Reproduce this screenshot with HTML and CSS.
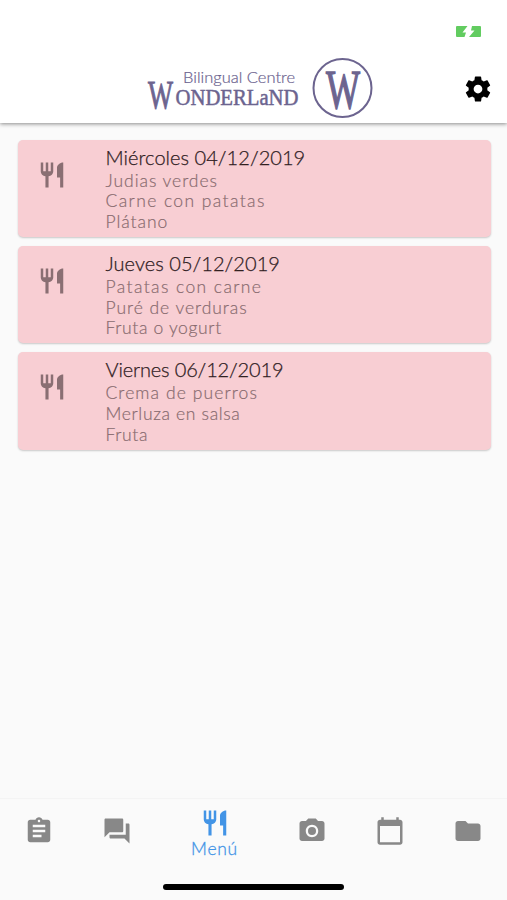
FILE: index.html
```
<!DOCTYPE html>
<html lang="es">
<head>
    <meta charset="UTF-8">
    <meta name="viewport" content="width=device-width, initial-scale=1.0">
    <title>Wonderland - Menú</title>
    <link rel="stylesheet" href="styles.css">
</head>
<body>
    <svg class="sprite" xmlns="http://www.w3.org/2000/svg">
        <symbol id="icon-menu" viewBox="0 0 24 24"><path d="M11 9H9V2H7v7H5V2H3v7c0 2.12 1.66 3.84 3.75 3.97V22h2.5v-9.03C11.34 12.84 13 11.12 13 9V2h-2v7zm5-3v8h2.5v8H21V2c-2.76 0-5 2.24-5 4z"/></symbol>
    </svg>

    <header class="header">
        <div class="status-bar">
            <svg class="battery" viewBox="0 0 25 11"><path d="M1 0h10.500L6.500 6.500H10L8.500 11H1a1 1 0 0 1-1-1V1a1 1 0 0 1 1-1z"/><path d="M16 0h8a1 1 0 0 1 1 1v9a1 1 0 0 1-1 1H13l5.500-6.500H15z"/></svg>
        </div>
        <div class="toolbar">
            <svg class="logo" viewBox="0 0 228 64">
                <text class="logo-small" x="37" y="25.500" textLength="112" lengthAdjust="spacingAndGlyphs">Bilingual Centre</text>
                <text class="logo-cap" x="2" y="51" textLength="25" lengthAdjust="spacingAndGlyphs">W</text>
                <text class="logo-name" x="29.500" y="47.500" textLength="123" lengthAdjust="spacingAndGlyphs">ONDERLaND</text>
                <circle cx="196.500" cy="31" r="29"/>
                <text class="logo-mark" x="180" y="51" textLength="34" lengthAdjust="spacingAndGlyphs">W</text>
            </svg>
            <button class="settings" aria-label="Ajustes">
                <svg class="icon" viewBox="0 0 24 24"><path d="M19.430 12.980c.04-.32.07-.64.07-.98s-.03-.66-.07-.98l2.110-1.650c.19-.15.24-.42.12-.64l-2-3.460c-.12-.22-.39-.3-.61-.22l-2.490 1c-.52-.4-1.080-.73-1.690-.98l-.38-2.650C14.460 2.180 14.250 2 14 2h-4c-.25 0-.46.18-.49.42l-.38 2.650c-.61.25-1.170.59-1.690.98l-2.490-1c-.23-.09-.49 0-.61.22l-2 3.460c-.13.22-.07.49.12.64l2.110 1.650c-.04.32-.07.65-.07.98s.03.66.07.98l-2.110 1.650c-.19.15-.24.42-.12.64l2 3.460c.12.22.39.3.61.22l2.490-1c.52.4 1.080.73 1.690.98l.38 2.650c.03.24.24.42.49.42h4c.25 0 .46-.18.49-.42l.38-2.650c.61-.25 1.170-.59 1.690-.98l2.490 1c.23.09.49 0 .61-.22l2-3.460c.12-.22.07-.49-.12-.64l-2.110-1.650zM12 15.500c-1.930 0-3.500-1.570-3.500-3.500s1.570-3.500 3.500-3.500 3.500 1.570 3.500 3.500-1.570 3.500-3.500 3.500z"/></svg>
            </button>
        </div>
    </header>

    <main class="menu-list">
        <article class="card">
            <svg class="icon"><use href="#icon-menu"/></svg>
            <div class="card-body">
                <h2>Miércoles 04/12/2019</h2>
                <p>Judias verdes</p>
                <p class="wider">Carne con patatas</p>
                <p>Plátano</p>
            </div>
        </article>
        <article class="card">
            <svg class="icon"><use href="#icon-menu"/></svg>
            <div class="card-body">
                <h2>Jueves 05/12/2019</h2>
                <p class="wider">Patatas con carne</p>
                <p>Puré de verduras</p>
                <p class="narrow">Fruta o yogurt</p>
            </div>
        </article>
        <article class="card">
            <svg class="icon"><use href="#icon-menu"/></svg>
            <div class="card-body">
                <h2 class="tight">Viernes 06/12/2019</h2>
                <p class="wide">Crema de puerros</p>
                <p class="narrow">Merluza en salsa</p>
                <p class="narrow">Fruta</p>
            </div>
        </article>
    </main>

    <footer class="footer">
        <nav class="tabs">
            <a class="tab"><svg class="icon" viewBox="0 0 24 24"><path d="M19 3h-4.180C14.400 1.840 13.300 1 12 1c-1.300 0-2.400.84-2.820 2H5c-1.100 0-2 .9-2 2v14c0 1.100.9 2 2 2h14c1.100 0 2-.9 2-2V5c0-1.100-.9-2-2-2zm-7 0c.55 0 1 .45 1 1s-.45 1-1 1-1-.45-1-1 .45-1 1-1zm2 14H7v-2h7v2zm3-4H7v-2h10v2zm0-4H7V7h10v2z"/></svg></a>
            <a class="tab"><svg class="icon" viewBox="0 0 24 24"><path d="M21 6h-2v9H6v2c0 .55.45 1 1 1h11l4 4V7c0-.55-.45-1-1-1zm-4 6V3c0-.55-.45-1-1-1H3c-.55 0-1 .45-1 1v14l4-4h10c.55 0 1-.45 1-1z"/></svg></a>
            <a class="tab active"><svg class="icon"><use href="#icon-menu"/></svg><span>Menú</span></a>
            <a class="tab"><svg class="icon" viewBox="0 0 24 24"><circle cx="12" cy="12" r="3.200"/><path d="M9 2L7.170 4H4c-1.100 0-2 .9-2 2v12c0 1.100.9 2 2 2h16c1.100 0 2-.9 2-2V6c0-1.100-.9-2-2-2h-3.170L15 2H9zm3 15c-2.760 0-5-2.240-5-5s2.240-5 5-5 5 2.240 5 5-2.240 5-5 5z"/></svg></a>
            <a class="tab"><svg class="icon" viewBox="0 0 24 24"><path d="M20 3h-1V1h-2v2H7V1H5v2H4c-1.100 0-2 .9-2 2v16c0 1.100.9 2 2 2h16c1.100 0 2-.9 2-2V5c0-1.100-.9-2-2-2zm0 18H4V8h16v13z"/></svg></a>
            <a class="tab"><svg class="icon" viewBox="0 0 24 24"><path d="M10 4H4c-1.100 0-1.990.9-1.990 2L2 18c0 1.100.9 2 2 2h16c1.100 0 2-.9 2-2V8c0-1.100-.9-2-2-2h-8l-2-2z"/></svg></a>
        </nav>
        <div class="home-bar"></div>
    </footer>
</body>
</html>
```
FILE: styles.css
```
:root {
    --primary-color: #4294e6;
    --logo-color: #6c648f;
    --card-color: #f8ced3;
    --gray: #888;
}
* { box-sizing: border-box; }
body {
    font-family: 'Century Gothic', Lato, sans-serif;
    margin: 0; background: #fafafa; color: #30201f;
    height: 100vh; display: flex; flex-direction: column; overflow: hidden;
}
.sprite { display: none; }
.icon { width: 30px; height: 30px; fill: currentColor; display: block; flex: none; }

.header { height: 123px; background: white; box-shadow: 0 1px 4px rgba(0,0,0,0.45); flex: none; }
.status-bar { height: 56px; padding: 26px 26px 0; display: flex; justify-content: flex-end; }
.battery { width: 25px; height: 11px; fill: #62cc60; }
.toolbar { height: 65px; padding: 0 14.5px 0 146px; display: flex; justify-content: space-between; align-items: center; }
.logo { width: 228px; height: 64px; fill: var(--logo-color); overflow: visible; }
.logo circle { fill: none; stroke: var(--logo-color); stroke-width: 2; }
.logo-small { font-size: 15px; font-weight: 300; fill: #6c648f; stroke: #6c648f; stroke-width: 0.2; }
.logo-cap, .logo-name, .logo-mark { font-family: 'Liberation Serif', serif; stroke: var(--logo-color); stroke-width: 0.5; }
.logo-cap { font-size: 40px; stroke-width: 1; }
.logo-name { font-size: 22.5px; }
.logo-mark { font-size: 54px; stroke-width: 1.4; }
.settings { border: none; background: none; padding: 0; color: black; }

.menu-list { flex: 1; padding: 17px 16.5px 0 17.5px; display: flex; flex-direction: column; gap: 9px; }
.card {
    height: 97.2px; display: flex; background: var(--card-color);
    border-radius: 5px; box-shadow: 0 1px 2px rgba(0,0,0,0.2);
}
.card .icon { margin: 19.5px 38.5px 0 19.5px; color: #8a6f73; }
.card-body { padding-top: 5px; }
h2 { margin: 0; font-size: 20px; line-height: 25.6px; font-weight: 300; -webkit-text-stroke: 0.25px; letter-spacing: 0.05px; white-space: nowrap; }
p { margin: 0; font-size: 17.5px; line-height: 20.8px; font-weight: 300; -webkit-text-stroke: 0.2px; letter-spacing: 0.95px; color: #886b6f; }
.tight { letter-spacing: -0.15px; }
.narrow { letter-spacing: 0.65px; }
.wide { letter-spacing: 1.1px; }
.wider { letter-spacing: 1.4px; }

.footer { height: 102px; border-top: 1px solid #f4f4f4; flex: none; }
.tabs { height: 65px; display: flex; color: var(--gray); }
.tab { flex: 2; display: flex; flex-direction: column; align-items: center; padding-top: 17px; }
.tab.active { flex: 3; padding-top: 8.5px; color: var(--primary-color); font-size: 17.5px; line-height: 21px; letter-spacing: 0.7px; }
.tab span { font-weight: 300; -webkit-text-stroke: 0.3px; }
.home-bar { width: 181px; height: 6px; margin: 20px auto 0; border-radius: 3px; background: black; }
```
